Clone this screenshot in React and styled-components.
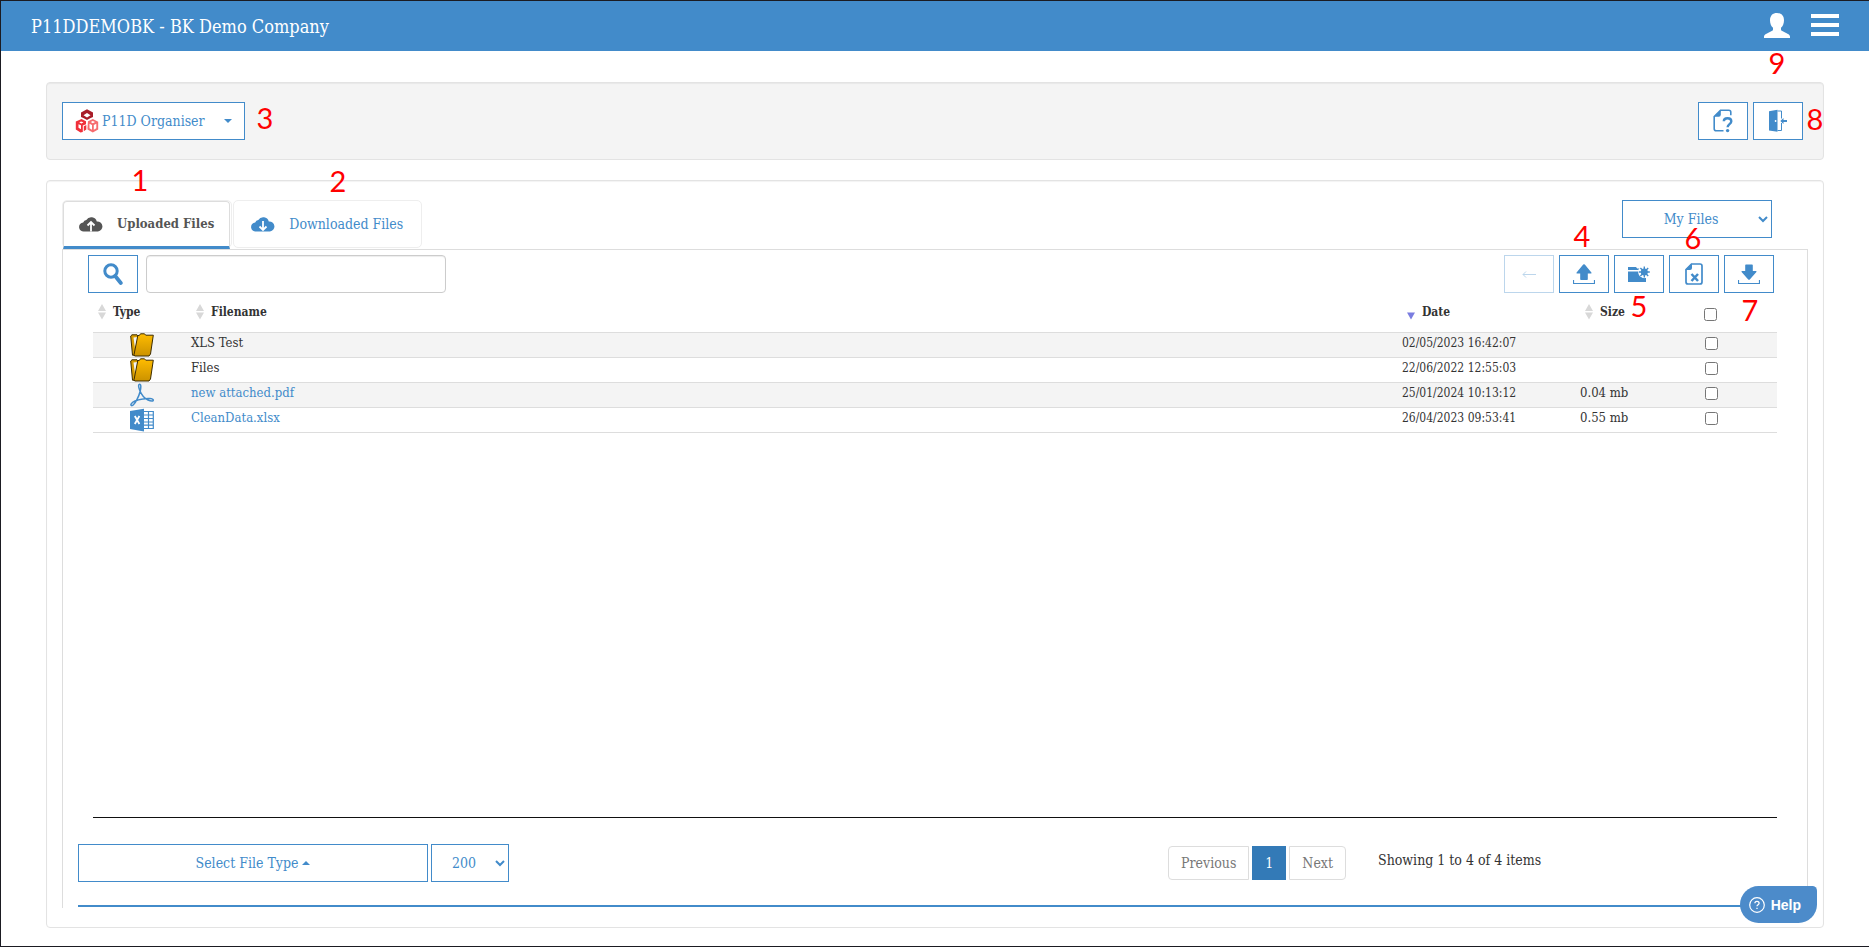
import React, { useState } from 'react';
import styled, { createGlobalStyle, css } from 'styled-components';

const blue = '#428bca';

const GlobalStyle = createGlobalStyle`
    * { box-sizing: border-box; }
    body {
        margin: 0;
        background: #fff;
        color: #333;
        font-family: "Roboto Slab", "DejaVu Serif Condensed", "DejaVu Serif", serif;
        font-size: 14px;
        line-height: 20px;
    }
    button, input, select { font: inherit; margin: 0; }
    a { color: ${blue}; text-decoration: none; }
`;

const Page = styled.div`
    position: relative;
    display: flex;
    flex-direction: column;
    min-height: 100vh;
    border: 1px solid #1b1b22;
    border-right: none;
`;

const TopBar = styled.header`
    display: flex;
    align-items: center;
    justify-content: space-between;
    height: 50px;
    padding: 0 30px;
    background: ${blue};
    color: #fff;
`;

const Title = styled.h1`
    margin: 0;
    padding-top: 2px;
    font-size: 18px;
    font-weight: 400;
    line-height: 24px;
`;

const TopActions = styled.div`
    display: flex;
    align-items: center;
    gap: 21px;
`;

const PlainButton = styled.button`
    display: flex;
    padding: 0;
    border: none;
    background: none;
    color: #fff;
    cursor: pointer;
`;

const Panel = styled.section`
    display: flex;
    border: 1px solid #e3e3e3;
    border-radius: 4px;
    box-shadow: inset 0 1px 1px rgba(0, 0, 0, 0.05);
`;

const MenuPanel = styled(Panel)`
    justify-content: space-between;
    margin: 31px 45px 20px;
    padding: 19px 20px 19px 15px;
    background: #f4f4f4;
`;

const FilesPanel = styled(Panel)`
    flex: 1;
    flex-direction: column;
    margin: 0 45px 18px;
    padding: 19px 15px;
`;

const boxed = css`
    height: 38px;
    border: 1px solid ${blue};
    border-radius: 0;
    background: #fff;
    color: ${blue};
    cursor: pointer;
`;

const OrganiserButton = styled.button`
    ${boxed}
    display: flex;
    align-items: center;
    gap: 3px;
    min-width: 183px;
    padding: 0 12px;
`;

const Caret = styled.span`
    border: 4px solid transparent;
    ${p => p.$up ? css`
    border-top: none;
    border-bottom-color: currentColor;
    ` : css`
    border-bottom: none;
    border-top-color: currentColor;
    margin-left: auto;
    `}
`;

const ButtonRow = styled.div`
    display: flex;
    gap: 5px;
`;

const IconButton = styled.button`
    ${boxed}
    display: flex;
    align-items: center;
    justify-content: center;
    width: 50px;
    padding: 0;
    &:disabled {
        opacity: 0.35;
        cursor: default;
    }
`;

const TabBar = styled.div`
    display: flex;
    justify-content: space-between;
    height: 49px;
    padding-right: 36px;
`;

const TabList = styled.ul`
    display: flex;
    gap: 1px;
    margin: 0;
    padding: 0;
    list-style: none;
`;

const TabItem = styled.li`
    height: 48px;
    padding-right: 1px;
    border: 1px solid #eee;
    border-radius: 5px;
`;

const Tab = styled.button`
    display: flex;
    align-items: center;
    gap: 14px;
    height: 46px;
    padding: 0 17px;
    border: none;
    background: none;
    color: ${blue};
    cursor: pointer;
    ${p => p.$active && css`
    height: 48px;
    padding: 0 15px;
    border: 1px solid #ddd;
    border-bottom: 3px solid ${blue};
    border-radius: 4px 4px 0 0;
    background: #fff;
    color: #555;
    font-size: 13px;
    font-weight: 700;
    `}
`;

const Select = styled.select`
    ${boxed}
    width: ${p => p.$width};
    padding: 0;
    text-align: center;
`;

const TabContent = styled.div`
    display: flex;
    flex: 1;
    flex-direction: column;
    padding: 5px 15px 1px;
    border: 1px solid #ddd;
    border-bottom: none;
`;

const Toolbar = styled.div`
    display: flex;
    justify-content: space-between;
    padding: 0 18px 0 10px;
`;

const Search = styled.form`
    display: flex;
    gap: 8px;
`;

const SearchInput = styled.input`
    width: 300px;
    height: 38px;
    padding: 6px 12px;
    border: 1px solid #ccc;
    border-radius: 4px;
    box-shadow: inset 0 1px 1px rgba(0, 0, 0, 0.075);
    color: #555;
`;

const ListArea = styled.div`
    flex: 1;
    margin: 0 15px;
    border-bottom: 1px solid #111;
`;

const FileTable = styled.table`
    width: 100%;
    table-layout: fixed;
    border-spacing: 0;
    font-size: 13px;
    tbody tr:nth-child(odd) { background: #f4f4f4; }
`;

const HeadCell = styled.th`
    width: ${p => p.$width || 'auto'};
    height: 40px;
    padding: 0 0 2px 5px;
    border-bottom: 1px solid #ddd;
    font-size: 12px;
    text-align: left;
`;

const HeadLabel = styled.span`
    display: flex;
    align-items: center;
    gap: 7px;
`;

const Cell = styled.td`
    height: 25px;
    padding: 0;
    border-bottom: 1px solid #ddd;
    vertical-align: top;
    white-space: nowrap;
`;

const DateCell = styled(Cell)`
    font-size: 12px;
`;

const TypeIcon = styled.span`
    display: flex;
    justify-content: center;
`;

const Tick = styled.input.attrs({ type: 'checkbox' })`
    display: block;
    width: 13px;
    height: 13px;
    && { margin: ${p => p.$head ? '6px 0 0 19px' : '4px 0 0 25px'}; }
`;

const Footer = styled.footer`
    display: flex;
    align-items: flex-start;
    gap: 3px;
    margin-top: 26px;
    padding-bottom: 23px;
    border-bottom: 2px solid ${blue};
`;

const FileTypeButton = styled.button`
    ${boxed}
    display: flex;
    align-items: center;
    justify-content: center;
    gap: 4px;
    width: 350px;
`;

const Pager = styled.nav`
    display: flex;
    gap: 3px;
    margin: 2px 29px 0 auto;
`;

const PageButton = styled.button`
    height: 34px;
    padding: 0 12px;
    border: 1px solid ${p => p.$active ? '#337ab7' : '#ddd'};
    border-radius: ${p => p.$radius || '0'};
    background: ${p => p.$active ? '#337ab7' : '#fff'};
    color: ${p => p.$active ? '#fff' : '#777'};
`;

const Info = styled.div`
    width: 414px;
    padding-top: 6px;
`;

const HelpButton = styled.button`
    position: fixed;
    right: 52px;
    bottom: 24px;
    display: flex;
    align-items: center;
    gap: 6px;
    height: 37px;
    padding: 0 16px 0 9px;
    border: none;
    border-radius: 20px 5px 20px 20px;
    background: #4c8bca;
    color: #fff;
    font: 700 14px "Liberation Sans", Arial, sans-serif;
    cursor: pointer;
`;

/* numbered callouts that lie over the page */
const Callout = styled.span`
    position: absolute;
    top: ${p => p.$top}px;
    ${p => p.$right ? `right: ${p.$right}px;` : `left: ${p.$left}px;`}
    width: 18px;
    color: #f00;
    font: 29px/30px Lato, "Open Sans", sans-serif;
    text-align: center;
    pointer-events: none;
`;

const callouts = [
    { n: 1, left: 130, top: 164 },
    { n: 2, left: 328, top: 165 },
    { n: 3, left: 255, top: 102 },
    { n: 4, right: 278, top: 220 },
    { n: 5, right: 221, top: 290 },
    { n: 6, right: 167, top: 222 },
    { n: 7, right: 110, top: 294 },
    { n: 8, right: 45, top: 103 },
    { n: 9, right: 83, top: 47 }
];

const files = [
    { name: 'XLS Test', type: 'folder', date: '02/05/2023 16:42:07', size: '' },
    { name: 'Files', type: 'folder', date: '22/06/2022 12:55:03', size: '' },
    { name: 'new attached.pdf', type: 'pdf', date: '25/01/2024 10:13:12', size: '0.04 mb' },
    { name: 'CleanData.xlsx', type: 'xlsx', date: '26/04/2023 09:53:41', size: '0.55 mb' }
];

const UserIcon = () => (
    <svg width="26" height="26" viewBox="0 0 26 26" fill="currentColor">
        <path d="M13 0c4.300 0 7 2.600 7 7.200 0 3.200-1.200 6-3 7.600v1.700c0 .8.5 1.200 1.300 1.600l5.700 2.900c1.300.7 2 1.500 2 2.800V25H0v-1.200c0-1.300.7-2.100 2-2.800l5.700-2.900C8.500 17.700 9 17.300 9 16.500v-1.700C7.200 13.200 6 10.400 6 7.200 6 2.600 8.700 0 13 0z" />
    </svg>
);

const MenuIcon = () => (
    <svg width="28" height="24" viewBox="0 0 28 24" fill="currentColor">
        <path d="M0 0h28v4H0zM0 9h28v4H0zM0 18h28v4H0z" />
    </svg>
);

const LogoIcon = () => (
    <svg width="24" height="24" viewBox="0 0 24 24">
        <path d="M6.500 10l4.500 2.200v3l-3.200 1.300V23L5.500 23.500 0.800 20.500v-8z" fill="#f0303a" />
        <path d="M3.500 15.200l2.500 1v4l-2.500-1.500zM6 12.500l2.500.8-2 1.200-2.300-.9z" fill="#fff" />
        <path d="M8.800 17.200l2.500-1.200v4.500l-2.500 1.800z" fill="#f0303a" />
        <path d="M13 12.300l4.800-2.300 5.400 2.800v7.700l-5.400 3-5.300-3v-2z" fill="#f66c6f" />
        <path d="M14.500 14.800l2.500 1.300v4.700l-2.500-1.500zM18.800 16.100l2.500-1.300v4.500l-2.500 1.500zM15.800 13l2-.9 2.200.9-2.200 1.200z" fill="#fff" />
        <path d="M12 .3l6 3.200V8l-2.800 1.200L12 11 8.800 9.200 6 8V3.500z" fill="#a81c28" />
        <path d="M8.500 6.300L12 4l3.500 2.300L12 8.600z" fill="#fff" />
    </svg>
);

const HelpDocIcon = () => (
    <svg width="20" height="24" viewBox="0 0 20 24" fill="none" stroke="currentColor" strokeWidth="1.600">
        <path d="M10.500 21.700H3.200A2 2 0 0 1 1.200 19.700V7.500L7.500 1.300h8.300a2 2 0 0 1 2 2v3" />
        <path d="M1 7.800L7.800 1v4.800a2 2 0 0 1-2 2z" fill="currentColor" stroke="none" />
        <path d="M10.800 12.200c.1-2 1.500-3 3.700-3s3.800 1.200 3.800 3.100c0 2.900-3.700 2.800-3.700 6" strokeWidth="2.400" />
        <circle cx="14.600" cy="21.600" r="1.700" fill="currentColor" stroke="none" />
    </svg>
);

const DoorIcon = () => (
    <svg width="20" height="24" viewBox="0 0 20 24" fill="currentColor">
        <path d="M1 2.200L9.500.8v22L1 21.400z" />
        <circle cx="7.600" cy="12" r=".9" fill="#fff" />
        <path d="M9.500 2h4v7.500M13.500 14v7.500h-4" fill="none" stroke="currentColor" />
        <path d="M12.300 12l3.200-3v2H19v2h-3.500v2z" />
    </svg>
);

const CloudIcon = ({ down }) => (
    <svg width="24" height="16" viewBox="0 0 24 16">
        <path d="M5 15.500a4.500 4.500 0 0 1-.8-9A4 4 0 0 1 7.300 4 5.800 5.800 0 0 1 17.800 5.500a5 5 0 0 1 1.200 10z" fill="currentColor" />
        {down
            ? <path d="M12 5v8.500M8.500 10.500l3.500 3.500 3.500-3.500" fill="none" stroke="#fff" strokeWidth="1.800" />
            : <path d="M12 15.500V6M8.500 9.500L12 6l3.500 3.500" fill="none" stroke="#fff" strokeWidth="1.800" />}
    </svg>
);

const SearchIcon = () => (
    <svg width="20" height="22" viewBox="0 0 20 22" fill="none" stroke="currentColor">
        <circle cx="8" cy="8" r="6.200" strokeWidth="3" />
        <path d="M12.200 13l5.600 7" strokeWidth="3.800" strokeLinecap="round" />
    </svg>
);

const BackIcon = () => (
    <svg width="14" height="8" viewBox="0 0 14 8" fill="none" stroke="currentColor">
        <path d="M14 4.500H1M4 1.500l-3 3 3 3" />
    </svg>
);

const TransferIcon = ({ down }) => (
    <svg width="22" height="22" viewBox="0 0 22 22" fill="currentColor">
        {down
            ? <path d="M8 1.500h6a.8.8 0 0 1 .8.8V8H18q1 .3.400 1.100l-6.600 7.300q-.8.700-1.600 0L3.600 9.100Q3 8.300 4 8h3.200V2.300A.8.8 0 0 1 8 1.500z" />
            : <path d="M8 17h6a.8.8 0 0 0 .8-.8V10.500H18q1-.3.400-1.100L11.800 1.600q-.8-.7-1.600 0L3.600 9.400Q3 10.200 4 10.500h3.200v5.700A.8.8 0 0 0 8 17z" />}
        <path d="M.5 17v3.500h21V17" fill="none" stroke="currentColor" strokeWidth="1.200" />
    </svg>
);

const NewFolderIcon = () => (
    <svg width="22" height="18" viewBox="0 0 22 18" fill="currentColor">
        <path d="M0 2h8l1.200 1.500h3V5H0zM0 6.500h18V17H0z" />
        <circle cx="16.300" cy="7" r="6.200" fill="#fff" />
        <circle cx="16.300" cy="7" r="3.500" />
        <path d="M16.300 1.500v11M10.800 7h11M12.400 3.100l7.800 7.800M20.200 3.100l-7.800 7.800" fill="none" stroke="currentColor" strokeWidth="1.400" />
        <path d="M0 11.500h12l3 2h3V17H0z" />
    </svg>
);

const DeleteFileIcon = () => (
    <svg width="18" height="22" viewBox="0 0 18 22" fill="none" stroke="currentColor">
        <path d="M6.500 1H15a2 2 0 0 1 2 2v16a2 2 0 0 1-2 2H3a2 2 0 0 1-2-2V6.500z" strokeWidth="1.700" />
        <path d="M.5 7L7 .5V5a2 2 0 0 1-2 2z" fill="currentColor" stroke="none" />
        <path d="M6.500 11l6.500 7M13 11l-6.500 7" strokeWidth="2.500" />
    </svg>
);

const SortIcon = ({ active }) => (
    <svg width="8" height="16" viewBox="0 0 8 16" fill={active ? '#7a7de0' : '#d8d8d8'}>
        {active ? <path d="M0 8.500h8l-4 7z" /> : <path d="M0 7l4-7 4 7zM0 8.500h8l-4 7z" />}
    </svg>
);

const FolderIcon = () => (
    <svg width="24" height="24" viewBox="0 0 24 24" strokeLinejoin="round">
        <defs>
            <linearGradient id="folder" x1="0" y1="0" x2="0" y2="1">
                <stop offset="0" stopColor="#ffbc00" />
                <stop offset="1" stopColor="#cb9200" />
            </linearGradient>
        </defs>
        <path d="M.7 3L2 1.800h5l1 1.400V22.500l-5.500-.3z" fill="#d99e00" stroke="#3d2c00" />
        <path d="M3.500 4.500l4-.5-2 15z" fill="#f4f4f4" />
        <path d="M7.800 2.500h1.500L10.500.8h4l1.200 1.400h7.600L20.500 21l-1.500 2H4.700L4 21.800z" fill="url(#folder)" stroke="#3d2c00" />
    </svg>
);

const PdfIcon = () => (
    <svg width="24" height="24" viewBox="0 0 24 24" fill="none" stroke={blue} strokeWidth="1.500">
        <path d="M9.500 1.200c-1.400.2-1 3 .3 6.300 1.300 3.300 4.300 7.700 8.200 9.500 3.200 1.500 5.400 1.300 5.300.1-.2-1.700-5.400-2.100-10.600-1C7.500 17 2.500 18.900 1.200 20.800c-1 1.500.5 2.500 2 1.200 2.200-1.900 5.700-8.600 7-13.800 1-4.300.8-7.200-.7-7z" />
    </svg>
);

const ExcelIcon = () => (
    <svg width="24" height="24" viewBox="0 0 24 24">
        <path d="M13 3.500h10.300v17H13M13 7h10M13 10.500h10M13 14h10M13 17.200h10M18.500 3.500v17" fill="none" stroke={blue} strokeWidth="1.200" />
        <path d="M0 3L14 .7v22.800L0 21z" fill={blue} />
        <path d="M4.800 8l4.600 8M9.400 8l-4.600 8" stroke="#fff" strokeWidth="1.800" />
    </svg>
);

const CircleHelpIcon = () => (
    <svg width="16" height="16" viewBox="0 0 16 16" fill="none" stroke="#fff">
        <circle cx="8" cy="8" r="7.300" strokeWidth="1.200" />
        <path d="M5.900 6.300c0-1.300.9-2 2.100-2s2.100.8 2.100 1.900c0 1.500-2.100 1.500-2.100 3.100M8 10.700v1.400" strokeWidth="1.300" />
    </svg>
);

const typeIcons = { folder: <FolderIcon />, pdf: <PdfIcon />, xlsx: <ExcelIcon /> };

const App = () => {
    const [tab, setTab] = useState('uploaded');
    const [search, setSearch] = useState('');

    return (
        <Page>
            <GlobalStyle />
            <TopBar>
                <Title>P11DDEMOBK - BK Demo Company</Title>
                <TopActions>
                    <PlainButton aria-label="Account"><UserIcon /></PlainButton>
                    <PlainButton aria-label="Menu"><MenuIcon /></PlainButton>
                </TopActions>
            </TopBar>

            <MenuPanel>
                <OrganiserButton>
                    <LogoIcon />
                    P11D Organiser
                    <Caret />
                </OrganiserButton>
                <ButtonRow>
                    <IconButton aria-label="Help document"><HelpDocIcon /></IconButton>
                    <IconButton aria-label="Exit"><DoorIcon /></IconButton>
                </ButtonRow>
            </MenuPanel>

            <FilesPanel>
                <TabBar>
                    <TabList>
                        <TabItem>
                            <Tab $active={tab === 'uploaded'} onClick={() => setTab('uploaded')}>
                                <CloudIcon />
                                Uploaded Files
                            </Tab>
                        </TabItem>
                        <TabItem>
                            <Tab $active={tab === 'downloaded'} onClick={() => setTab('downloaded')}>
                                <CloudIcon down />
                                Downloaded Files
                            </Tab>
                        </TabItem>
                    </TabList>
                    <Select $width="150px" aria-label="Folder">
                        <option>My Files</option>
                    </Select>
                </TabBar>

                <TabContent>
                    <Toolbar>
                        <Search onSubmit={e => e.preventDefault()}>
                            <IconButton aria-label="Search"><SearchIcon /></IconButton>
                            <SearchInput aria-label="Search files" value={search} onChange={e => setSearch(e.target.value)} />
                        </Search>
                        <ButtonRow>
                            <IconButton disabled aria-label="Back"><BackIcon /></IconButton>
                            <IconButton aria-label="Upload"><TransferIcon /></IconButton>
                            <IconButton aria-label="New folder"><NewFolderIcon /></IconButton>
                            <IconButton aria-label="Delete"><DeleteFileIcon /></IconButton>
                            <IconButton aria-label="Download"><TransferIcon down /></IconButton>
                        </ButtonRow>
                    </Toolbar>

                    <ListArea>
                        <FileTable>
                            <thead>
                                <tr>
                                    <HeadCell $width="98px"><HeadLabel><SortIcon />Type</HeadLabel></HeadCell>
                                    <HeadCell><HeadLabel><SortIcon />Filename</HeadLabel></HeadCell>
                                    <HeadCell $width="178px"><HeadLabel><SortIcon active />Date</HeadLabel></HeadCell>
                                    <HeadCell $width="100px"><HeadLabel><SortIcon />Size</HeadLabel></HeadCell>
                                    <HeadCell $width="97px"><Tick $head aria-label="Select all" /></HeadCell>
                                </tr>
                            </thead>
                            <tbody>
                                {files.map(file => (
                                    <tr key={file.name}>
                                        <Cell><TypeIcon>{typeIcons[file.type]}</TypeIcon></Cell>
                                        <Cell>{file.type === 'folder' ? file.name : <a href="#file">{file.name}</a>}</Cell>
                                        <DateCell>{file.date}</DateCell>
                                        <Cell>{file.size}</Cell>
                                        <Cell><Tick aria-label={file.name} /></Cell>
                                    </tr>
                                ))}
                            </tbody>
                        </FileTable>
                    </ListArea>

                    <Footer>
                        <FileTypeButton>Select File Type <Caret $up /></FileTypeButton>
                        <Select $width="78px" aria-label="Items per page">
                            <option>200</option>
                        </Select>
                        <Pager>
                            <PageButton $radius="4px 0 0 4px">Previous</PageButton>
                            <PageButton $active>1</PageButton>
                            <PageButton $radius="0 4px 4px 0">Next</PageButton>
                        </Pager>
                        <Info>Showing 1 to 4 of 4 items</Info>
                    </Footer>
                </TabContent>
            </FilesPanel>

            {callouts.map(c => (
                <Callout key={c.n} $left={c.left} $right={c.right} $top={c.top}>{c.n}</Callout>
            ))}
            <HelpButton><CircleHelpIcon />Help</HelpButton>
        </Page>
    );
};

export default App;
